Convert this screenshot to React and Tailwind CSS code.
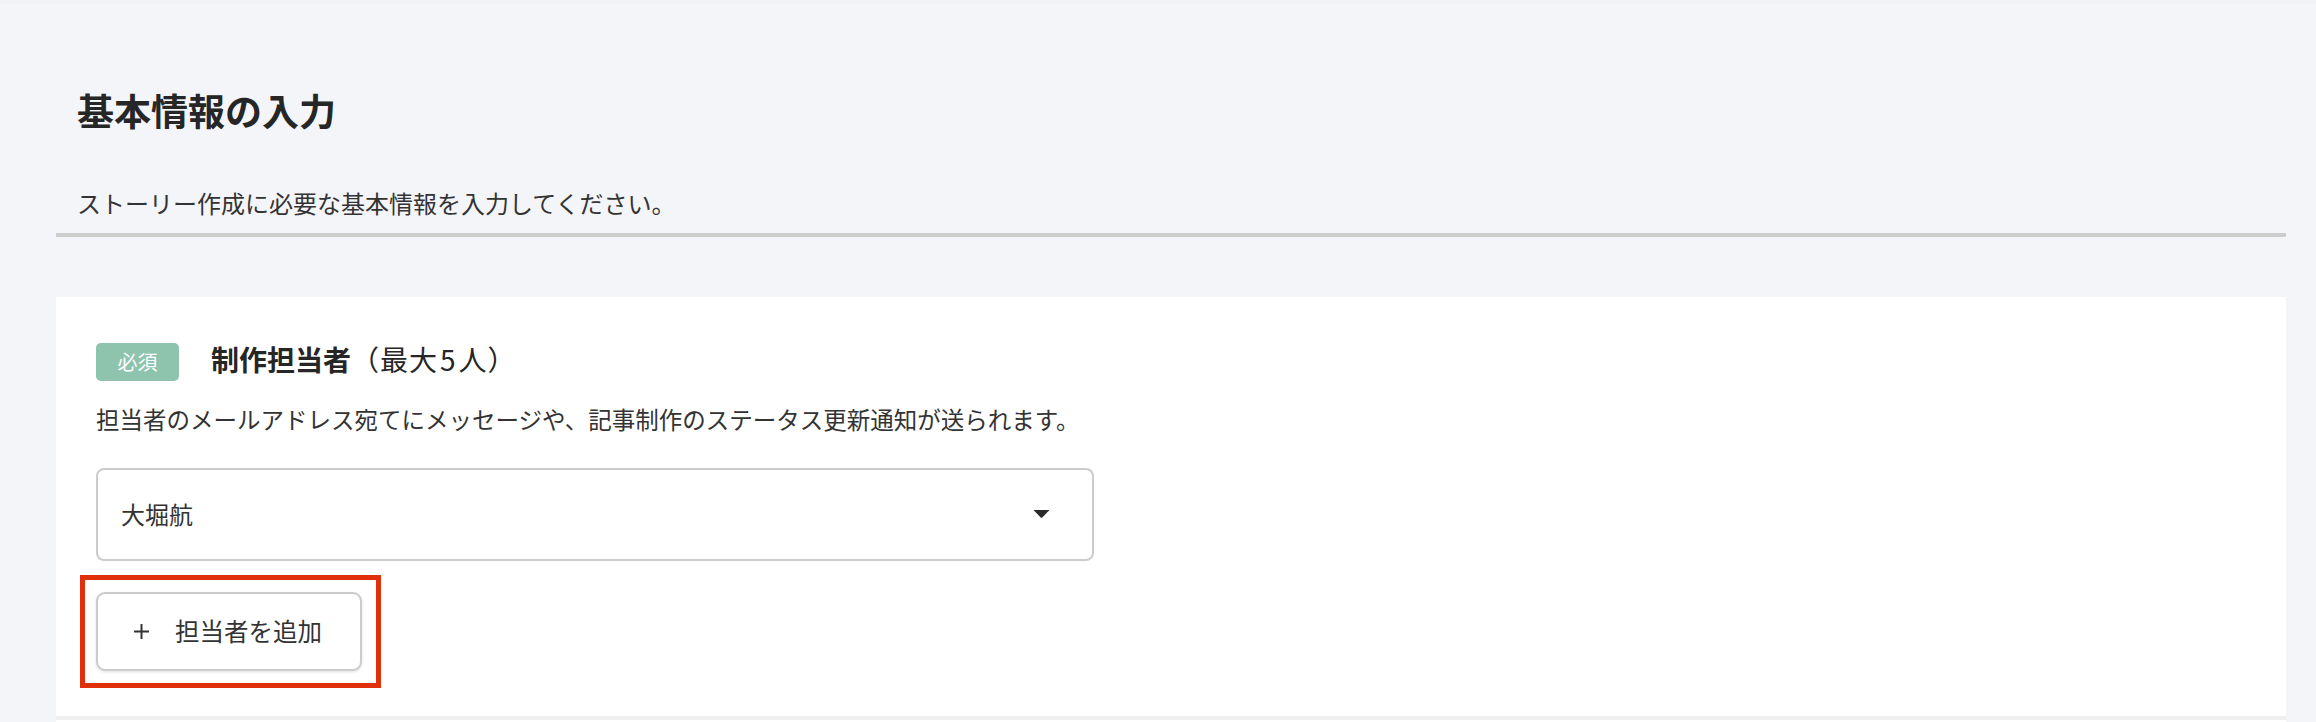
export default function App() {
  return (
    <div className="min-h-screen bg-[#f4f5f9] font-['Noto_Sans_CJK_JP',sans-serif] text-[#333333]">
      <div className="h-[4px] bg-[#f1f2f6]" />
      <div className="pl-[56px] pr-[30px]">
        <header className="px-[21px] pt-[88px]">
          <h1 className="text-[37px] leading-none font-bold text-[#262626]">基本情報の入力</h1>
          <p className="mt-[62px] text-[24px] leading-none">ストーリー作成に必要な基本情報を入力してください。</p>
        </header>
        <div className="mt-[18px] h-[4px] bg-[#cccccc]" />
        <section className="mt-[60px] bg-white pt-[46px] pl-[40px] pb-[45px]">
          <div className="flex items-center">
            <span className="flex h-[38px] w-[83px] items-center justify-center rounded-[5px] bg-[#8ec3ae] text-[20px] leading-none text-white">
              必須
            </span>
            <h2 className="mb-[6px] ml-[32px] text-[28px] leading-none text-[#262626]">
              <span className="font-bold">制作担当者</span>
              <span className="font-normal tracking-[1px]">
                （最大<span className="mx-[2px]">5</span>人）
              </span>
            </h2>
          </div>
          <p className="mt-[27px] text-[23.5px] leading-none">
            担当者のメールアドレス宛てにメッセージや、記事制作のステータス更新通知が送られます。
          </p>
          <div className="mt-[36px] flex h-[93px] w-[998px] items-center justify-between rounded-[8px] border-2 border-[#cccccc] pl-[23px] pr-[42px]">
            <span className="text-[24px] leading-none">大堀航</span>
            <svg width="17" height="8" viewBox="0 0 17 8" className="block">
              <path d="M0.5 0 H16.5 L9.3 7.4 Q8.5 8.2 7.7 7.4 Z" fill="#2a2a2a" />
            </svg>
          </div>
          <div className="relative mt-[31px] inline-block">
            <button className="flex h-[79px] w-[266px] items-center rounded-[9px] border-2 border-[#cccccc] bg-white pl-[35px] shadow-[0_1px_3px_rgba(0,0,0,0.12)]">
              <svg width="17" height="17" viewBox="0 0 17 17" className="block">
                <path d="M8.5 1 V16 M1 8.5 H16" stroke="#333333" strokeWidth="2" fill="none" />
              </svg>
              <span className="ml-[25px] text-[24.5px] leading-none text-[#333333]">担当者を追加</span>
            </button>
            <span className="pointer-events-none absolute bottom-[-17px] left-[-16px] right-[-19px] top-[-17px] border-[5px] border-[#e0300a]" />
          </div>
        </section>
        <div className="h-[4px] bg-[#efefef]" />
        <div className="h-[40px] bg-white" />
      </div>
    </div>
  );
}
